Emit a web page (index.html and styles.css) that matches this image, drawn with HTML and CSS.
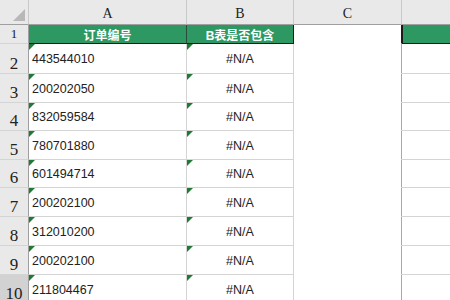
FILE: index.html
```html
<!DOCTYPE html>
<html>
<head>
<meta charset="utf-8">
<link rel="stylesheet" href="styles.css">
</head>
<body>
<div class="sheet">
  <div class="row hdr">
    <div class="corner"><span class="tri"></span></div>
    <div class="colh">A</div>
    <div class="colh">B</div>
    <div class="colh">C</div>
    <div class="colh last"></div>
  </div>
  <div class="row r1">
    <div class="rowh">1</div>
    <div class="cell head">订单编号</div>
    <div class="cell head headb">B表是否包含</div>
    <div class="cell blank"></div>
    <div class="cell head headd"></div>
  </div>
  <div class="row h30"><div class="rowh">2</div><div class="cell txt"><i class="flag"></i>443544010</div><div class="cell na"><i class="flag"></i>#N/A</div><div class="cell blank"></div><div class="cell dcol"></div></div>
  <div class="row h29"><div class="rowh">3</div><div class="cell txt"><i class="flag"></i>200202050</div><div class="cell na"><i class="flag"></i>#N/A</div><div class="cell blank"></div><div class="cell dcol"></div></div>
  <div class="row h28"><div class="rowh">4</div><div class="cell txt"><i class="flag"></i>832059584</div><div class="cell na"><i class="flag"></i>#N/A</div><div class="cell blank"></div><div class="cell dcol"></div></div>
  <div class="row h29"><div class="rowh">5</div><div class="cell txt"><i class="flag"></i>780701880</div><div class="cell na"><i class="flag"></i>#N/A</div><div class="cell blank"></div><div class="cell dcol"></div></div>
  <div class="row h28"><div class="rowh">6</div><div class="cell txt"><i class="flag"></i>601494714</div><div class="cell na"><i class="flag"></i>#N/A</div><div class="cell blank"></div><div class="cell dcol"></div></div>
  <div class="row h29"><div class="rowh">7</div><div class="cell txt"><i class="flag"></i>200202100</div><div class="cell na"><i class="flag"></i>#N/A</div><div class="cell blank"></div><div class="cell dcol"></div></div>
  <div class="row h29"><div class="rowh">8</div><div class="cell txt"><i class="flag"></i>312010200</div><div class="cell na"><i class="flag"></i>#N/A</div><div class="cell blank"></div><div class="cell dcol"></div></div>
  <div class="row h29"><div class="rowh">9</div><div class="cell txt"><i class="flag"></i>200202100</div><div class="cell na"><i class="flag"></i>#N/A</div><div class="cell blank"></div><div class="cell dcol"></div></div>
  <div class="row h29"><div class="rowh sel">10</div><div class="cell txt"><i class="flag"></i>211804467</div><div class="cell na"><i class="flag"></i>#N/A</div><div class="cell blank"></div><div class="cell dcol"></div></div>
</div>
</body>
</html>
```
FILE: styles.css
```css
html, body {
  margin: 0;
  padding: 0;
  background: #ffffff;
  overflow: hidden;
}
.sheet {
  width: 450px;
  height: 300px;
  overflow: hidden;
}
.row {
  display: grid;
  grid-template-columns: 29px 158px 107px 108px 49px;
}
.row > div {
  box-sizing: border-box;
  border-right: 1px solid #d4d4d4;
  border-bottom: 1px solid #d4d4d4;
  position: relative;
}
.hdr { height: 25px; }
.r1 { height: 19px; }
.h30 { height: 30px; }
.h29 { height: 29px; }
.h28 { height: 28px; }

.hdr > div {
  background: #e9e9e9;
  border-bottom: 1px solid #9f9f9f;
  border-right: 1px solid #c9c9c9;
}
.corner { overflow: hidden; }
.corner .tri {
  position: absolute;
  right: 3px;
  bottom: 3px;
  width: 0;
  height: 0;
  border-left: 12px solid transparent;
  border-bottom: 12px solid #b8b8b8;
}
.colh {
  display: flex;
  align-items: flex-end;
  justify-content: center;
  padding-bottom: 3px;
  font-family: "Liberation Serif", "DejaVu Serif", serif;
  font-size: 14px;
  line-height: 14px;
  color: #222;
}
.colh.last { border-right: none; }

.rowh {
  background: #e9e9e9;
  border-right: 1px solid #9f9f9f !important;
  display: flex;
  align-items: flex-end;
  justify-content: center;
  padding-bottom: 2px;
  font-family: "Liberation Serif", "DejaVu Serif", serif;
  font-size: 17px;
  line-height: 15px;
  color: #222;
}
.r1 .rowh {
  font-size: 13px;
  line-height: 12px;
  padding-bottom: 3px;
}
.rowh.sel { background: #d2d2d2; }

.cell {
  font-family: "Liberation Sans", "Noto Sans CJK SC", Arial, sans-serif;
  color: #222;
}
.head {
  background: #2e9862;
  color: #ffffff;
  font-weight: bold;
  font-size: 12px;
  display: flex;
  align-items: center;
  justify-content: center;
  border-bottom: 1px solid #1b1b1b !important;
  border-right: 1px solid #2a4a3a !important;
}
.headb { border-right: 1px solid #1b1b1b !important; }
.headd {
  border-left: 1px solid #1b1b1b;
  border-right: none !important;
}
.blank {
  background: #ffffff;
  border-bottom: 1px solid #ffffff !important;
  border-right: 1px solid #a8a8a8 !important;
}
.r1 .blank { border-right: 1px solid #1b1b1b !important; }
.txt {
  display: flex;
  align-items: center;
  padding-left: 3px;
  padding-top: 1px;
  font-size: 12.5px;
}
.na {
  display: flex;
  align-items: center;
  justify-content: center;
  padding-top: 1px;
  font-size: 12.5px;
}
.dcol { border-right: none !important; }
.flag {
  position: absolute;
  left: 0;
  top: 0;
  width: 0;
  height: 0;
  border-top: 6px solid #1f7a34;
  border-right: 6px solid transparent;
}
```
